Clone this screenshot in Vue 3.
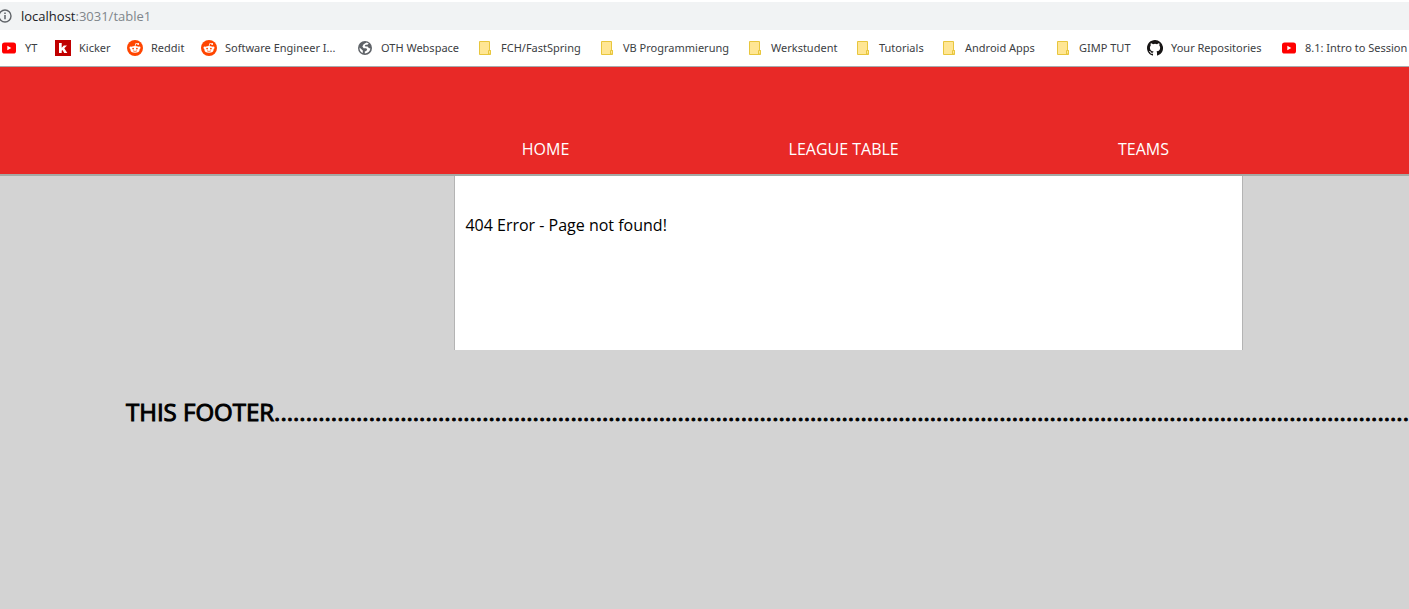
<script setup>
const bookmarks = [
  { icon: 'youtube', label: 'YT' },
  { icon: 'kicker', label: 'Kicker' },
  { icon: 'reddit', label: 'Reddit' },
  { icon: 'reddit', label: 'Software Engineer I...' },
  { icon: 'globe', label: 'OTH Webspace' },
  { icon: 'folder', label: 'FCH/FastSpring' },
  { icon: 'folder', label: 'VB Programmierung' },
  { icon: 'folder', label: 'Werkstudent' },
  { icon: 'folder', label: 'Tutorials' },
  { icon: 'folder', label: 'Android Apps' },
  { icon: 'folder', label: 'GIMP TUT' },
  { icon: 'github', label: 'Your Repositories' },
  { icon: 'youtube', label: '8.1: Intro to Session' },
]
const links = ['HOME', 'LEAGUE TABLE', 'TEAMS']
const footerText = 'THIS FOOTER' + '.'.repeat(181)
</script>

<template>
  <div class="page">
    <div class="address">
      <svg class="info" viewBox="0 0 14 14" aria-hidden="true">
        <circle cx="7" cy="7" r="6" fill="none" stroke="#5f6368" stroke-width="1.4" />
        <path d="M7 6v4.2M7 3.6v1.5" stroke="#5f6368" stroke-width="1.5" />
      </svg>
      <span class="url"><b>localhost</b>:3031/table1</span>
    </div>

    <nav class="bookmarks" aria-label="Bookmarks">
      <a v-for="(b, i) in bookmarks" :key="i" href="#" class="bookmark">
        <svg class="icon" viewBox="0 0 16 16" aria-hidden="true">
          <template v-if="b.icon === 'youtube'">
            <rect x="1" y="2.5" width="14" height="11" rx="2.6" fill="#f00" />
            <path d="M6.3 5.7v4.6L10.3 8z" fill="#fff" />
          </template>
          <template v-else-if="b.icon === 'kicker'">
            <rect width="16" height="16" fill="#c00000" />
            <path d="M4 3h2.7v4.8L8.8 5.4H12L9.3 8.3l3 4.7H9.2L7.5 10l-.8.8V13H4z" fill="#fff" />
          </template>
          <template v-else-if="b.icon === 'reddit'">
            <circle cx="8" cy="8" r="8" fill="#ff4500" />
            <path d="M8 6.4l.8-3 2.3.6" fill="none" stroke="#fff" stroke-width=".8" />
            <circle cx="11.2" cy="4" r=".9" fill="#fff" />
            <circle cx="3.7" cy="7.8" r="1.2" fill="#fff" />
            <circle cx="12.3" cy="7.8" r="1.2" fill="#fff" />
            <ellipse cx="8" cy="9.4" rx="4.6" ry="3.3" fill="#fff" />
            <circle cx="6.1" cy="8.6" r=".9" fill="#ff4500" />
            <circle cx="9.9" cy="8.6" r=".9" fill="#ff4500" />
            <path d="M6 10.8q2 1.3 4 0" fill="none" stroke="#ff4500" stroke-width=".7" />
          </template>
          <template v-else-if="b.icon === 'globe'">
            <circle cx="8" cy="8" r="7" fill="#5f6368" />
            <path d="M9.6 2.6L6.6 4.2 5.4 6.6l1.2 1.6h2.6l1 1.2-1 1.6-1.4.6v1.9c3-.1 5.3-2.2 5.6-4.9l-1.6-.6-1.2-1.4H8.4l-.6-1 1-.8h1.6l1.4-1.2z" fill="#fff" />
            <path d="M2.5 7.4l3.3 3v2.6C3.6 12 2.3 10 2.5 7.4z" fill="#fff" />
          </template>
          <template v-else-if="b.icon === 'folder'">
            <path d="M2.5 1.5h10v9h1v4h-11z" fill="#ffe694" stroke="#e8c63d" />
            <path d="M11.5 14v-3.5h2V14z" fill="#ffe694" stroke="#e8c63d" />
          </template>
          <path
            v-else
            fill="#171515"
            d="M8 0C3.58 0 0 3.58 0 8c0 3.54 2.29 6.53 5.47 7.59.4.07.55-.17.55-.38v-1.49c-2.01.37-2.53-.49-2.69-.94-.09-.23-.48-.94-.82-1.13-.28-.15-.68-.52-.01-.53.63-.01 1.08.58 1.23.82.72 1.21 1.87.87 2.33.66.07-.52.28-.87.51-1.07-1.78-.2-3.64-.89-3.64-3.95 0-.87.31-1.59.82-2.15-.08-.2-.36-1.02.08-2.12 0 0 .67-.21 2.2.82a7.6 7.6 0 0 1 4 0c1.53-1.04 2.2-.82 2.2-.82.44 1.1.16 1.92.08 2.12.51.56.82 1.27.82 2.15 0 3.07-1.87 3.75-3.65 3.95.29.25.54.73.54 1.48v2.2c0 .21.15.46.55.38A8 8 0 0 0 8 0z"
          />
        </svg>
        <span>{{ b.label }}</span>
      </a>
    </nav>

    <header class="header">
      <nav class="menu" aria-label="Main">
        <a v-for="l in links" :key="l" href="#">{{ l }}</a>
      </nav>
    </header>

    <main class="content">
      <p>404 Error - Page not found!</p>
    </main>

    <footer class="footer">{{ footerText }}</footer>
  </div>
</template>

<style>
body {
  margin: 0;
  background: #d3d3d3;
}
</style>

<style scoped>
.page {
  overflow: hidden;
  font-family: "Open Sans", "Noto Sans", sans-serif;
  color: #000;
}
.address {
  display: flex;
  align-items: center;
  gap: 9px;
  height: 28px;
  border-top: 2px solid #fff;
  background: #f1f3f4;
}
.info {
  flex: none;
  width: 14px;
  height: 14px;
  margin-left: -2px;
}
.url {
  font-size: 13px;
  line-height: 20px;
  color: #80868b;
}
.url b {
  font-weight: 400;
  color: #202124;
}
.bookmarks {
  display: grid;
  grid-template-columns: 54px 72px 74px 156px 120px 122px 148px 108px 86px 114px 92px 134px auto;
  height: 36px;
  padding-left: 1px;
  border-bottom: 1px solid #a8abad;
  background: #fff;
}
.bookmark {
  display: flex;
  align-items: center;
  gap: 8px;
  font-family: "Noto Sans", sans-serif;
  font-size: 11px;
  line-height: 16px;
  color: #3c4043;
  text-decoration: none;
  white-space: nowrap;
}
.icon {
  flex: none;
  width: 16px;
  height: 16px;
}
.header {
  padding-top: 70px;
  border-bottom: 2px solid #a5a9a5;
  background: #e82927;
}
.menu {
  display: flex;
  justify-content: space-around;
  width: 61.5%;
  margin-left: 29.25%;
  padding-bottom: 13px;
}
.menu a {
  font-size: 16px;
  line-height: 24px;
  color: #fff;
  text-decoration: none;
}
.content {
  box-sizing: border-box;
  width: 56%;
  min-height: 174px;
  margin-left: 32.25%;
  padding: 37px 10px;
  border: solid #b4b4b4;
  border-width: 0 1px;
  background: #fff;
}
.content p {
  margin: 0;
  font-size: 16px;
  line-height: 24px;
}
.footer {
  margin: 46px 0 0 126px;
  font-size: 24px;
  line-height: 32px;
  white-space: nowrap;
  -webkit-text-stroke: 1px #000;
}
</style>
